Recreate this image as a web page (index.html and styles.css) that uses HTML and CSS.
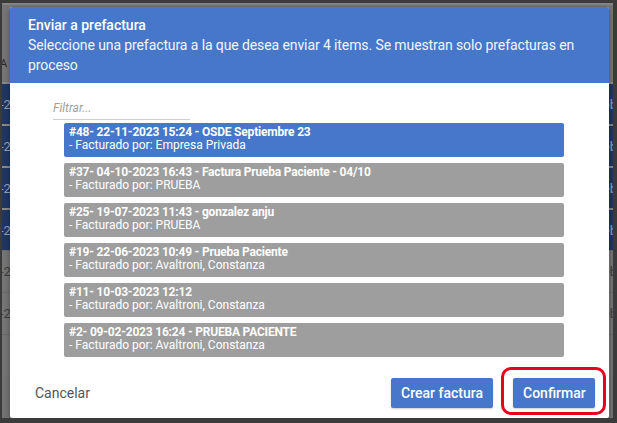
FILE: index.html
```html
<!DOCTYPE html>
<html lang="es">
<head>
<meta charset="utf-8">
<link rel="stylesheet" href="styles.css">
</head>
<body>
<div class="frame">
  <div class="backdrop">
    <div class="bg-top"><span class="bg-label">A ˅</span></div>
    <div class="bg-row navy"><span>-2</span><span>eb</span></div>
    <div class="bg-row navy"><span>-2</span><span>eb</span></div>
    <div class="bg-row navy"><span>-2</span><span>eb</span></div>
    <div class="bg-row navy"><span>-2</span><span>eb</span></div>
    <div class="bg-row gray"><span>-2</span><span>eb</span></div>
    <div class="bg-row gray"><span>-2</span><span>eb</span></div>
    <div class="bg-row gray"><span></span><span></span></div>
  </div>

  <div class="dialog">
    <div class="dialog-header">
      <div class="dialog-title">Enviar a prefactura</div>
      <div class="dialog-sub">Seleccione una prefactura a la que desea enviar 4 items. Se muestran solo prefacturas en proceso</div>
    </div>
    <div class="dialog-body">
      <div class="filter">Filtrar...</div>
      <ul class="list">
        <li class="item selected"><b>#48- 22-11-2023 15:24 - OSDE Septiembre 23</b><span>- Facturado por: Empresa Privada</span></li>
        <li class="item"><b>#37- 04-10-2023 16:43 - Factura Prueba Paciente - 04/10</b><span>- Facturado por: PRUEBA</span></li>
        <li class="item"><b>#25- 19-07-2023 11:43 - gonzalez anju</b><span>- Facturado por: PRUEBA</span></li>
        <li class="item"><b>#19- 22-06-2023 10:49 - Prueba Paciente</b><span>- Facturado por: Avaltroni, Constanza</span></li>
        <li class="item"><b>#11- 10-03-2023 12:12</b><span>- Facturado por: Avaltroni, Constanza</span></li>
        <li class="item"><b>#2- 09-02-2023 16:24 - PRUEBA PACIENTE</b><span>- Facturado por: Avaltroni, Constanza</span></li>
      </ul>
    </div>
    <div class="dialog-footer">
      <button class="btn-text">Cancelar</button>
      <div class="actions">
        <button class="btn">Crear factura</button>
        <button class="btn highlight">Confirmar</button>
      </div>
    </div>
  </div>
</div>
</body>
</html>
```
FILE: styles.css
```css
* { box-sizing: border-box; }
html, body { margin: 0; padding: 0; }
body {
  width: 617px;
  height: 423px;
  overflow: hidden;
  font-family: Roboto, "Noto Sans", "Liberation Sans", sans-serif;
  background: #3a3a3a;
}
.frame {
  position: relative;
  width: 617px;
  height: 423px;
  border: 2px solid #3b3b3b;
  border-top-width: 3px;
  border-right-width: 4px;
  border-bottom-width: 5px;
  background: #747474;
  overflow: hidden;
}
.backdrop {
  display: flex;
  flex-direction: column;
}
.bg-top {
  height: 79px;
  background: #767676;
  border-top: 2px solid #858585;
  position: relative;
}
.bg-label {
  position: absolute;
  left: -2px;
  top: 50px;
  font-size: 11px;
  color: #2a2a2a;
}
.bg-row {
  height: 42px;
  display: flex;
  justify-content: space-between;
  align-items: center;
  font-size: 13px;
  color: #9aa3b5;
  border-top: 2px solid #8a8a8a;
}
.bg-row span:first-child { margin-left: -2px; }
.bg-row span:last-child { margin-right: -4px; }
.bg-row.navy { background: #1f3763; }
.bg-row.gray { background: #767676; color: #3d3d3d; border-top: 1px solid #6c6c6c; }

.dialog {
  position: absolute;
  left: 8px;
  top: 4px;
  width: 599px;
  height: 411px;
  background: #fff;
  border-radius: 2px;
  box-shadow: 0 2px 6px rgba(0,0,0,0.35);
  display: flex;
  flex-direction: column;
}
.dialog-header {
  background: #4677ca;
  color: #fff;
  padding: 8px 24px 8px 18px;
  border-radius: 2px 2px 0 0;
  height: 76px;
}
.dialog-title {
  font-size: 14px;
  line-height: 20px;
  font-weight: 500;
}
.dialog-sub {
  font-size: 14px;
  line-height: 20px;
  letter-spacing: -0.1px;
  color: #f3f5fb;
}
.dialog-body {
  padding: 16px 0 0 43px;
  flex: 1;
}
.filter {
  width: 137px;
  height: 21px;
  border-bottom: 1px solid #cfcfcf;
  font-size: 12px;
  font-style: italic;
  color: #a0a0a0;
  line-height: 16px;
  padding-top: 1px;
}
.list {
  list-style: none;
  margin: 3px 0 0 11px;
  padding: 0;
  display: flex;
  flex-direction: column;
  gap: 6px;
  width: 500px;
}
.item {
  height: 34px;
  background: #9e9e9e;
  color: #fff;
  border-radius: 2px;
  padding: 3px 5px 0;
  font-size: 12px;
  line-height: 13px;
  display: flex;
  flex-direction: column;
}
.item b { font-weight: 700; letter-spacing: -0.2px; }
.item span { font-weight: 400; }
.item.selected { background: #4677ca; }

.dialog-footer {
  display: flex;
  justify-content: space-between;
  align-items: center;
  padding: 0 14px 5px 25px;
  height: 46px;
  flex-shrink: 0;
}
.btn-text {
  background: none;
  border: none;
  padding: 0;
  font-family: inherit;
  font-size: 14px;
  color: #555;
  cursor: pointer;
}
.actions {
  display: flex;
  gap: 20px;
}
.btn {
  height: 30px;
  padding: 0 10px;
  background: #4677ca;
  color: #fff;
  border: none;
  border-radius: 2px;
  font-family: inherit;
  font-size: 14px;
  font-weight: 500;
  box-shadow: 0 1px 2px rgba(0,0,0,0.2);
  cursor: pointer;
}
.btn.highlight {
  position: relative;
  width: 82px;
}
.btn.highlight::after {
  content: "";
  position: absolute;
  left: -12px;
  right: -11px;
  top: -11px;
  bottom: -7px;
  border: 3px solid #e8001c;
  border-radius: 10px;
}
```
